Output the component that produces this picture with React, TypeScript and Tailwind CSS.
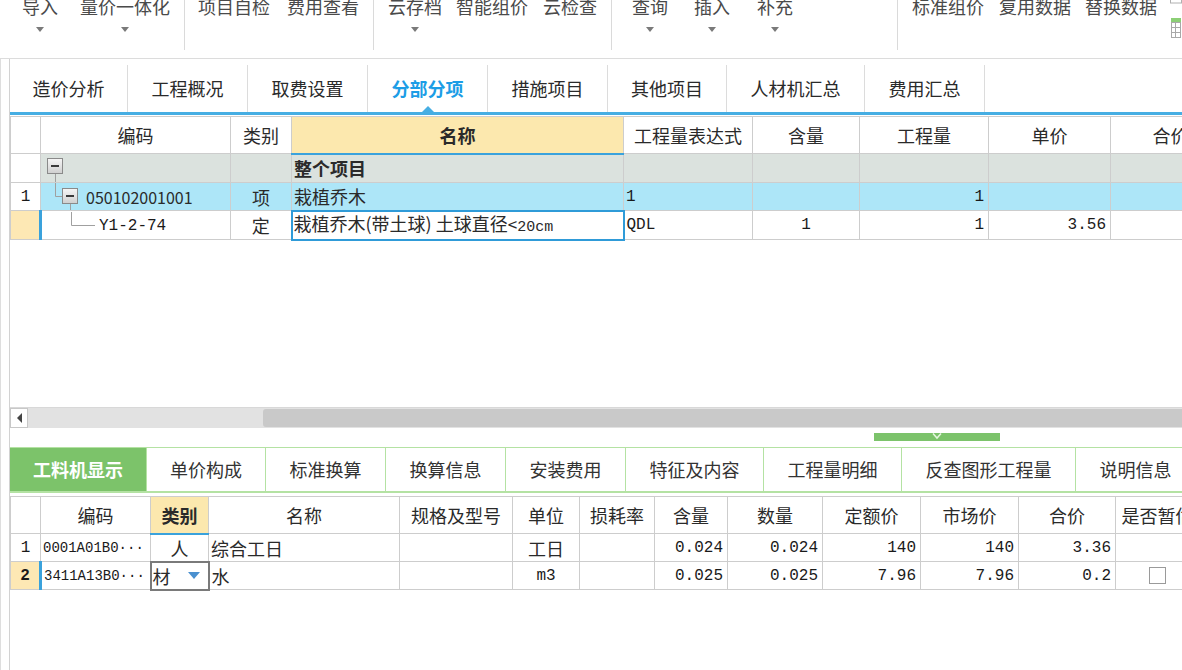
import React from 'react';

const CJK = "font-['Noto_Sans_CJK_SC','Noto_Sans',sans-serif]";
const MONO = "font-['Liberation_Mono','Noto_Sans_CJK_SC',monospace]";

const DropArrow = () => (
  <div className="w-0 h-0 border-x-[4px] border-x-transparent border-t-[5px] border-t-[#7a7a7a]" />
);

type ToolProps = { label: string; className: string; arrow?: boolean };

const ToolItem = ({ label, className, arrow }: ToolProps) => (
  <div className={`flex flex-col items-center shrink-0 ${className}`}>
    <div className="-mt-[6px] h-[24px] leading-[24px] text-[18px] text-[#4a4a4a] whitespace-nowrap">{label}</div>
    {arrow && (
      <div className="mt-[9px]">
        <DropArrow />
      </div>
    )}
  </div>
);

const Sep = ({ className }: { className: string }) => (
  <div className={`shrink-0 w-px h-[50px] bg-[#dadada] ${className}`} />
);

const Toolbar = () => (
  <div className="h-[59px] border-b border-[#dcdcdc] flex overflow-hidden">
    <ToolItem label="导入" className="w-[36px] ml-[22px]" arrow />
    <ToolItem label="量价一体化" className="w-[90px] ml-[22px]" arrow />
    <Sep className="ml-[14px]" />
    <ToolItem label="项目自检" className="w-[72px] ml-[13px]" />
    <ToolItem label="费用查看" className="w-[72px] ml-[17px]" />
    <Sep className="ml-[14px]" />
    <ToolItem label="云存档" className="w-[54px] ml-[14px]" arrow />
    <ToolItem label="智能组价" className="w-[72px] ml-[14px]" />
    <ToolItem label="云检查" className="w-[54px] ml-[15px]" />
    <Sep className="ml-[14px]" />
    <ToolItem label="查询" className="w-[36px] ml-[20px]" arrow />
    <ToolItem label="插入" className="w-[36px] ml-[26px]" arrow />
    <ToolItem label="补充" className="w-[36px] ml-[27px]" arrow />
    <Sep className="ml-[104px]" />
    <ToolItem label="标准组价" className="w-[72px] ml-[14px]" />
    <ToolItem label="复用数据" className="w-[72px] ml-[15px]" />
    <ToolItem label="替换数据" className="w-[72px] ml-[14px]" />
    <svg className="ml-[13px] shrink-0" width="12" height="42" viewBox="0 0 12 42">
      <rect x="0.5" y="-3" width="11" height="6" fill="#fff" stroke="#b0b0b0" />
      <rect x="1" y="18" width="10" height="4" fill="#8ccf76" />
      <rect x="1.5" y="22.5" width="9" height="15" fill="#fff" stroke="#a8a8a8" />
      <line x1="1.5" y1="27.5" x2="10.5" y2="27.5" stroke="#a8a8a8" />
      <line x1="1.5" y1="32.5" x2="10.5" y2="32.5" stroke="#a8a8a8" />
      <line x1="5.5" y1="22.5" x2="5.5" y2="37.5" stroke="#a8a8a8" />
    </svg>
  </div>
);

const topTabs = [
  { label: '造价分析', w: 'w-[118px]' },
  { label: '工程概况', w: 'w-[120px]' },
  { label: '取费设置', w: 'w-[120px]' },
  { label: '分部分项', w: 'w-[120px]', active: true },
  { label: '措施项目', w: 'w-[120px]' },
  { label: '其他项目', w: 'w-[119px]' },
  { label: '人材机汇总', w: 'w-[138px]' },
  { label: '费用汇总', w: 'w-[120px]' },
];

const bottomTabs = [
  { label: '工料机显示', w: 'w-[137px]', active: true },
  { label: '单价构成', w: 'w-[119px]' },
  { label: '标准换算', w: 'w-[120px]' },
  { label: '换算信息', w: 'w-[120px]' },
  { label: '安装费用', w: 'w-[120px]' },
  { label: '特征及内容', w: 'w-[138px]' },
  { label: '工程量明细', w: 'w-[138px]' },
  { label: '反查图形工程量', w: 'w-[174px]' },
  { label: '说明信息', w: 'w-[120px]' },
];

const MinusBox = ({ x, y }: { x: number; y: number }) => (
  <g>
    <rect x={x + 0.5} y={y + 0.5} width="15" height="15" fill="url(#mb)" stroke="#8a8a8a" />
    <line x1={x + 4} y1={y + 8} x2={x + 12} y2={y + 8} stroke="#3a3a3a" strokeWidth="2" />
  </g>
);

const bd = 'border border-[#cdcdcd]';
const num = `${MONO} text-[16px] text-[#1a1a1a]`;

const UpperGrid = () => (
  <div className="h-[291px] overflow-hidden">
    <svg width="0" height="0" className="absolute">
      <defs>
        <linearGradient id="mb" x1="0" y1="0" x2="0" y2="1">
          <stop offset="0" stopColor="#f6f6f6" />
          <stop offset="1" stopColor="#cfcfcf" />
        </linearGradient>
      </defs>
    </svg>
    <table className="table-fixed border-collapse w-[1220px] text-[18px] leading-[22px] text-[#2a2a2a]">
      <colgroup>
        <col className="w-[30px]" />
        <col className="w-[190px]" />
        <col className="w-[61px]" />
        <col className="w-[332px]" />
        <col className="w-[129px]" />
        <col className="w-[107px]" />
        <col className="w-[129px]" />
        <col className="w-[122px]" />
        <col className="w-[120px]" />
      </colgroup>
      <thead>
        <tr className="h-[37px]">
          <th className={`${bd} font-normal`} />
          <th className={`${bd} font-normal`}>编码</th>
          <th className={`${bd} font-normal`}>类别</th>
          <th className={`${bd} font-bold bg-[#fce8ae] border-b-2 border-b-[#3aa2dc]`}>名称</th>
          <th className={`${bd} font-normal`}>工程量表达式</th>
          <th className={`${bd} font-normal`}>含量</th>
          <th className={`${bd} font-normal`}>工程量</th>
          <th className={`${bd} font-normal`}>单价</th>
          <th className={`${bd} font-normal`}>合价</th>
        </tr>
      </thead>
      <tbody>
        <tr className="h-[29px]">
          <td className={`${bd} bg-white`} />
          <td className={`${bd} bg-[#dbe2de] p-0`}>
            <svg width="40" height="28" className="block">
              <MinusBox x={6} y={4} />
              <line x1="14.5" y1="20" x2="14.5" y2="28" stroke="#a0a0a0" />
            </svg>
          </td>
          <td className={`${bd} bg-[#dbe2de]`} />
          <td className={`${bd} bg-[#dbe2de] px-[2px] font-bold`}>整个项目</td>
          <td className={`${bd} bg-[#dbe2de]`} />
          <td className={`${bd} bg-[#dbe2de]`} />
          <td className={`${bd} bg-[#dbe2de]`} />
          <td className={`${bd} bg-[#dbe2de]`} />
          <td className={`${bd} bg-[#dbe2de]`} />
        </tr>
        <tr className="h-[28px] bg-[#ade6f8]">
          <td className={`${bd} bg-white text-center ${num}`}>1</td>
          <td className={`${bd} p-0`}>
            <div className="flex items-center">
              <svg width="45" height="27" className="block shrink-0">
                <line x1="14.5" y1="0" x2="14.5" y2="13.5" stroke="#a0a0a0" />
                <line x1="14.5" y1="13.5" x2="21" y2="13.5" stroke="#a0a0a0" />
                <MinusBox x={21} y={5} />
                <line x1="29.5" y1="21" x2="29.5" y2="27" stroke="#a0a0a0" />
              </svg>
              <span className="text-[16px]">050102001001</span>
            </div>
          </td>
          <td className={`${bd} text-center`}>项</td>
          <td className={`${bd} px-[2px]`}>栽植乔木</td>
          <td className={`${bd} px-[2px] ${num}`}>1</td>
          <td className={bd} />
          <td className={`${bd} text-right pr-[4px] ${num}`}>1</td>
          <td className={bd} />
          <td className={bd} />
        </tr>
        <tr className="h-[28px] bg-white">
          <td className={`${bd} bg-[#fde8b4]`} />
          <td className={`${bd} border-l-[3px] border-l-[#3aa2dc] p-0`}>
            <div className="flex items-center h-[26px]">
              <svg width="57" height="26" className="block shrink-0">
                <line x1="29.5" y1="0" x2="29.5" y2="13.5" stroke="#a0a0a0" />
                <line x1="29.5" y1="13.5" x2="53" y2="13.5" stroke="#a0a0a0" />
              </svg>
              <span className={`${num} pt-[2px]`}>Y1-2-74</span>
            </div>
          </td>
          <td className={`${bd} text-center`}>定</td>
          <td className="border-2 border-[#2f9bd8] px-[1px] whitespace-nowrap overflow-hidden">
            栽植乔木(带土球) 土球直径<span className="text-[17px]">&lt;</span>
            <span className={`${MONO} text-[15px]`}>20cm</span>
          </td>
          <td className={`${bd} px-[2px] ${num}`}>QDL</td>
          <td className={`${bd} text-center ${num}`}>1</td>
          <td className={`${bd} text-right pr-[4px] ${num}`}>1</td>
          <td className={`${bd} text-right pr-[4px] ${num}`}>3.56</td>
          <td className={bd} />
        </tr>
      </tbody>
    </table>
  </div>
);

const ScrollBar = () => (
  <div className="h-[21px] flex bg-[#e2e2e2] border-t border-[#d8d8d8]">
    <div className="w-[18px] h-full bg-white border border-[#c8c8c8] flex items-center justify-center shrink-0">
      <div className="w-0 h-0 border-y-[5px] border-y-transparent border-r-[5px] border-r-[#444]" />
    </div>
    <div className="flex-1 flex items-center pl-[235px]">
      <div className="h-[18px] flex-1 bg-[#c9c9c9] rounded-l-[3px]" />
    </div>
  </div>
);

const Splitter = () => (
  <div className="h-[19px]">
    <div className="ml-[864px] mt-[5px] w-[126px] h-[8px] bg-[#7cc36b] flex justify-center">
      <svg width="12" height="8" className="block">
        <polyline points="2,0.5 6,5 10,0.5" fill="none" stroke="#e8f6e2" strokeWidth="1.5" />
      </svg>
    </div>
  </div>
);

const BottomTabs = () => (
  <div className="h-[46px] flex border-t border-b-2 border-[#b4e2a3] overflow-hidden">
    {bottomTabs.map((t) => (
      <div
        key={t.label}
        className={`${t.w} shrink-0 h-full flex items-center justify-center text-[18px] border-r border-[#b4e2a3] ${
          t.active ? 'bg-[#7cc36a] text-white font-bold' : 'text-[#333]'
        }`}
      >
        {t.label}
      </div>
    ))}
  </div>
);

const LowerGrid = () => (
  <div className="mt-[3px] overflow-hidden">
    <table className="table-fixed border-collapse w-[1220px] text-[18px] leading-[22px] text-[#2a2a2a]">
      <colgroup>
        <col className="w-[30px]" />
        <col className="w-[110px]" />
        <col className="w-[58px]" />
        <col className="w-[191px]" />
        <col className="w-[113px]" />
        <col className="w-[67px]" />
        <col className="w-[75px]" />
        <col className="w-[73px]" />
        <col className="w-[95px]" />
        <col className="w-[98px]" />
        <col className="w-[98px]" />
        <col className="w-[97px]" />
        <col className="w-[84px]" />
        <col className="w-[41px]" />
      </colgroup>
      <thead>
        <tr className="h-[37px]">
          <th className={`${bd} font-normal`} />
          <th className={`${bd} font-normal`}>编码</th>
          <th className={`${bd} font-bold bg-[#fce8ae] border-b-2 border-b-[#3aa2dc]`}>类别</th>
          <th className={`${bd} font-normal`}>名称</th>
          <th className={`${bd} font-normal`}>规格及型号</th>
          <th className={`${bd} font-normal`}>单位</th>
          <th className={`${bd} font-normal`}>损耗率</th>
          <th className={`${bd} font-normal`}>含量</th>
          <th className={`${bd} font-normal`}>数量</th>
          <th className={`${bd} font-normal`}>定额价</th>
          <th className={`${bd} font-normal`}>市场价</th>
          <th className={`${bd} font-normal`}>合价</th>
          <th className={`${bd} font-normal whitespace-nowrap`}>是否暂估</th>
          <th className={`${bd} font-normal`} />
        </tr>
      </thead>
      <tbody>
        <tr className="h-[28px]">
          <td className={`${bd} text-center ${num}`}>1</td>
          <td className={`${bd} px-[2px] whitespace-nowrap ${MONO} text-[14px] text-[#1a1a1a]`}>0001A01B0···</td>
          <td className={`${bd} text-center`}>人</td>
          <td className={`${bd} px-[2px]`}>综合工日</td>
          <td className={bd} />
          <td className={`${bd} text-center`}>工日</td>
          <td className={bd} />
          <td className={`${bd} text-right pr-[4px] ${num}`}>0.024</td>
          <td className={`${bd} text-right pr-[4px] ${num}`}>0.024</td>
          <td className={`${bd} text-right pr-[4px] ${num}`}>140</td>
          <td className={`${bd} text-right pr-[4px] ${num}`}>140</td>
          <td className={`${bd} text-right pr-[4px] ${num}`}>3.36</td>
          <td className={bd} />
          <td className={bd} />
        </tr>
        <tr className="h-[28px]">
          <td className={`${bd} text-center bg-[#fde8b4] font-bold ${num}`}>2</td>
          <td className={`${bd} border-l-[3px] border-l-[#3aa2dc] px-[2px] whitespace-nowrap ${MONO} text-[14px] text-[#1a1a1a]`}>
            3411A13B0···
          </td>
          <td className="border-2 border-[#7a7a7a] p-0">
            <div className="flex items-center justify-between pl-[1px] pr-[8px]">
              <span>材</span>
              <div className="w-0 h-0 border-x-[6px] border-x-transparent border-t-[7px] border-t-[#4a90cf]" />
            </div>
          </td>
          <td className={`${bd} px-[2px]`}>水</td>
          <td className={bd} />
          <td className={`${bd} text-center ${num}`}>m3</td>
          <td className={bd} />
          <td className={`${bd} text-right pr-[4px] ${num}`}>0.025</td>
          <td className={`${bd} text-right pr-[4px] ${num}`}>0.025</td>
          <td className={`${bd} text-right pr-[4px] ${num}`}>7.96</td>
          <td className={`${bd} text-right pr-[4px] ${num}`}>7.96</td>
          <td className={`${bd} text-right pr-[4px] ${num}`}>0.2</td>
          <td className={bd}>
            <div className="flex justify-center">
              <div className="w-[17px] h-[17px] border border-[#9a9a9a] bg-white" />
            </div>
          </td>
          <td className={bd} />
        </tr>
      </tbody>
    </table>
  </div>
);

export default function App() {
  return (
    <div className={`w-[1182px] h-[670px] overflow-hidden bg-white text-[#2a2a2a] ${CJK}`}>
      <Toolbar />
      <div className="flex h-[611px]">
        <div className="w-[10px] shrink-0 border-r border-[#d2d2d2] border-l border-l-dotted border-l-[#dedede]" />
        <div className="flex-1 min-w-0 flex flex-col">
          {/* top tabs */}
          <div className="h-[53px] flex items-end">
            {topTabs.map((t) => (
              <div
                key={t.label}
                className={`${t.w} shrink-0 h-[47px] relative flex items-center justify-center text-[18px] border-r border-[#dcdcdc] ${
                  t.active ? 'text-[#1c9de6] font-bold' : 'text-[#2a2a2a]'
                }`}
              >
                {t.label}
                {t.active && (
                  <div className="absolute bottom-0 left-1/2 -translate-x-1/2 w-0 h-0 border-x-[6px] border-x-transparent border-b-[6px] border-b-[#46aee3]" />
                )}
              </div>
            ))}
          </div>
          <div className="h-[3px] bg-[#46aee3]" />
          <div className="h-[1px]" />
          <UpperGrid />
          <ScrollBar />
          <Splitter />
          <BottomTabs />
          <LowerGrid />
        </div>
      </div>
    </div>
  );
}
